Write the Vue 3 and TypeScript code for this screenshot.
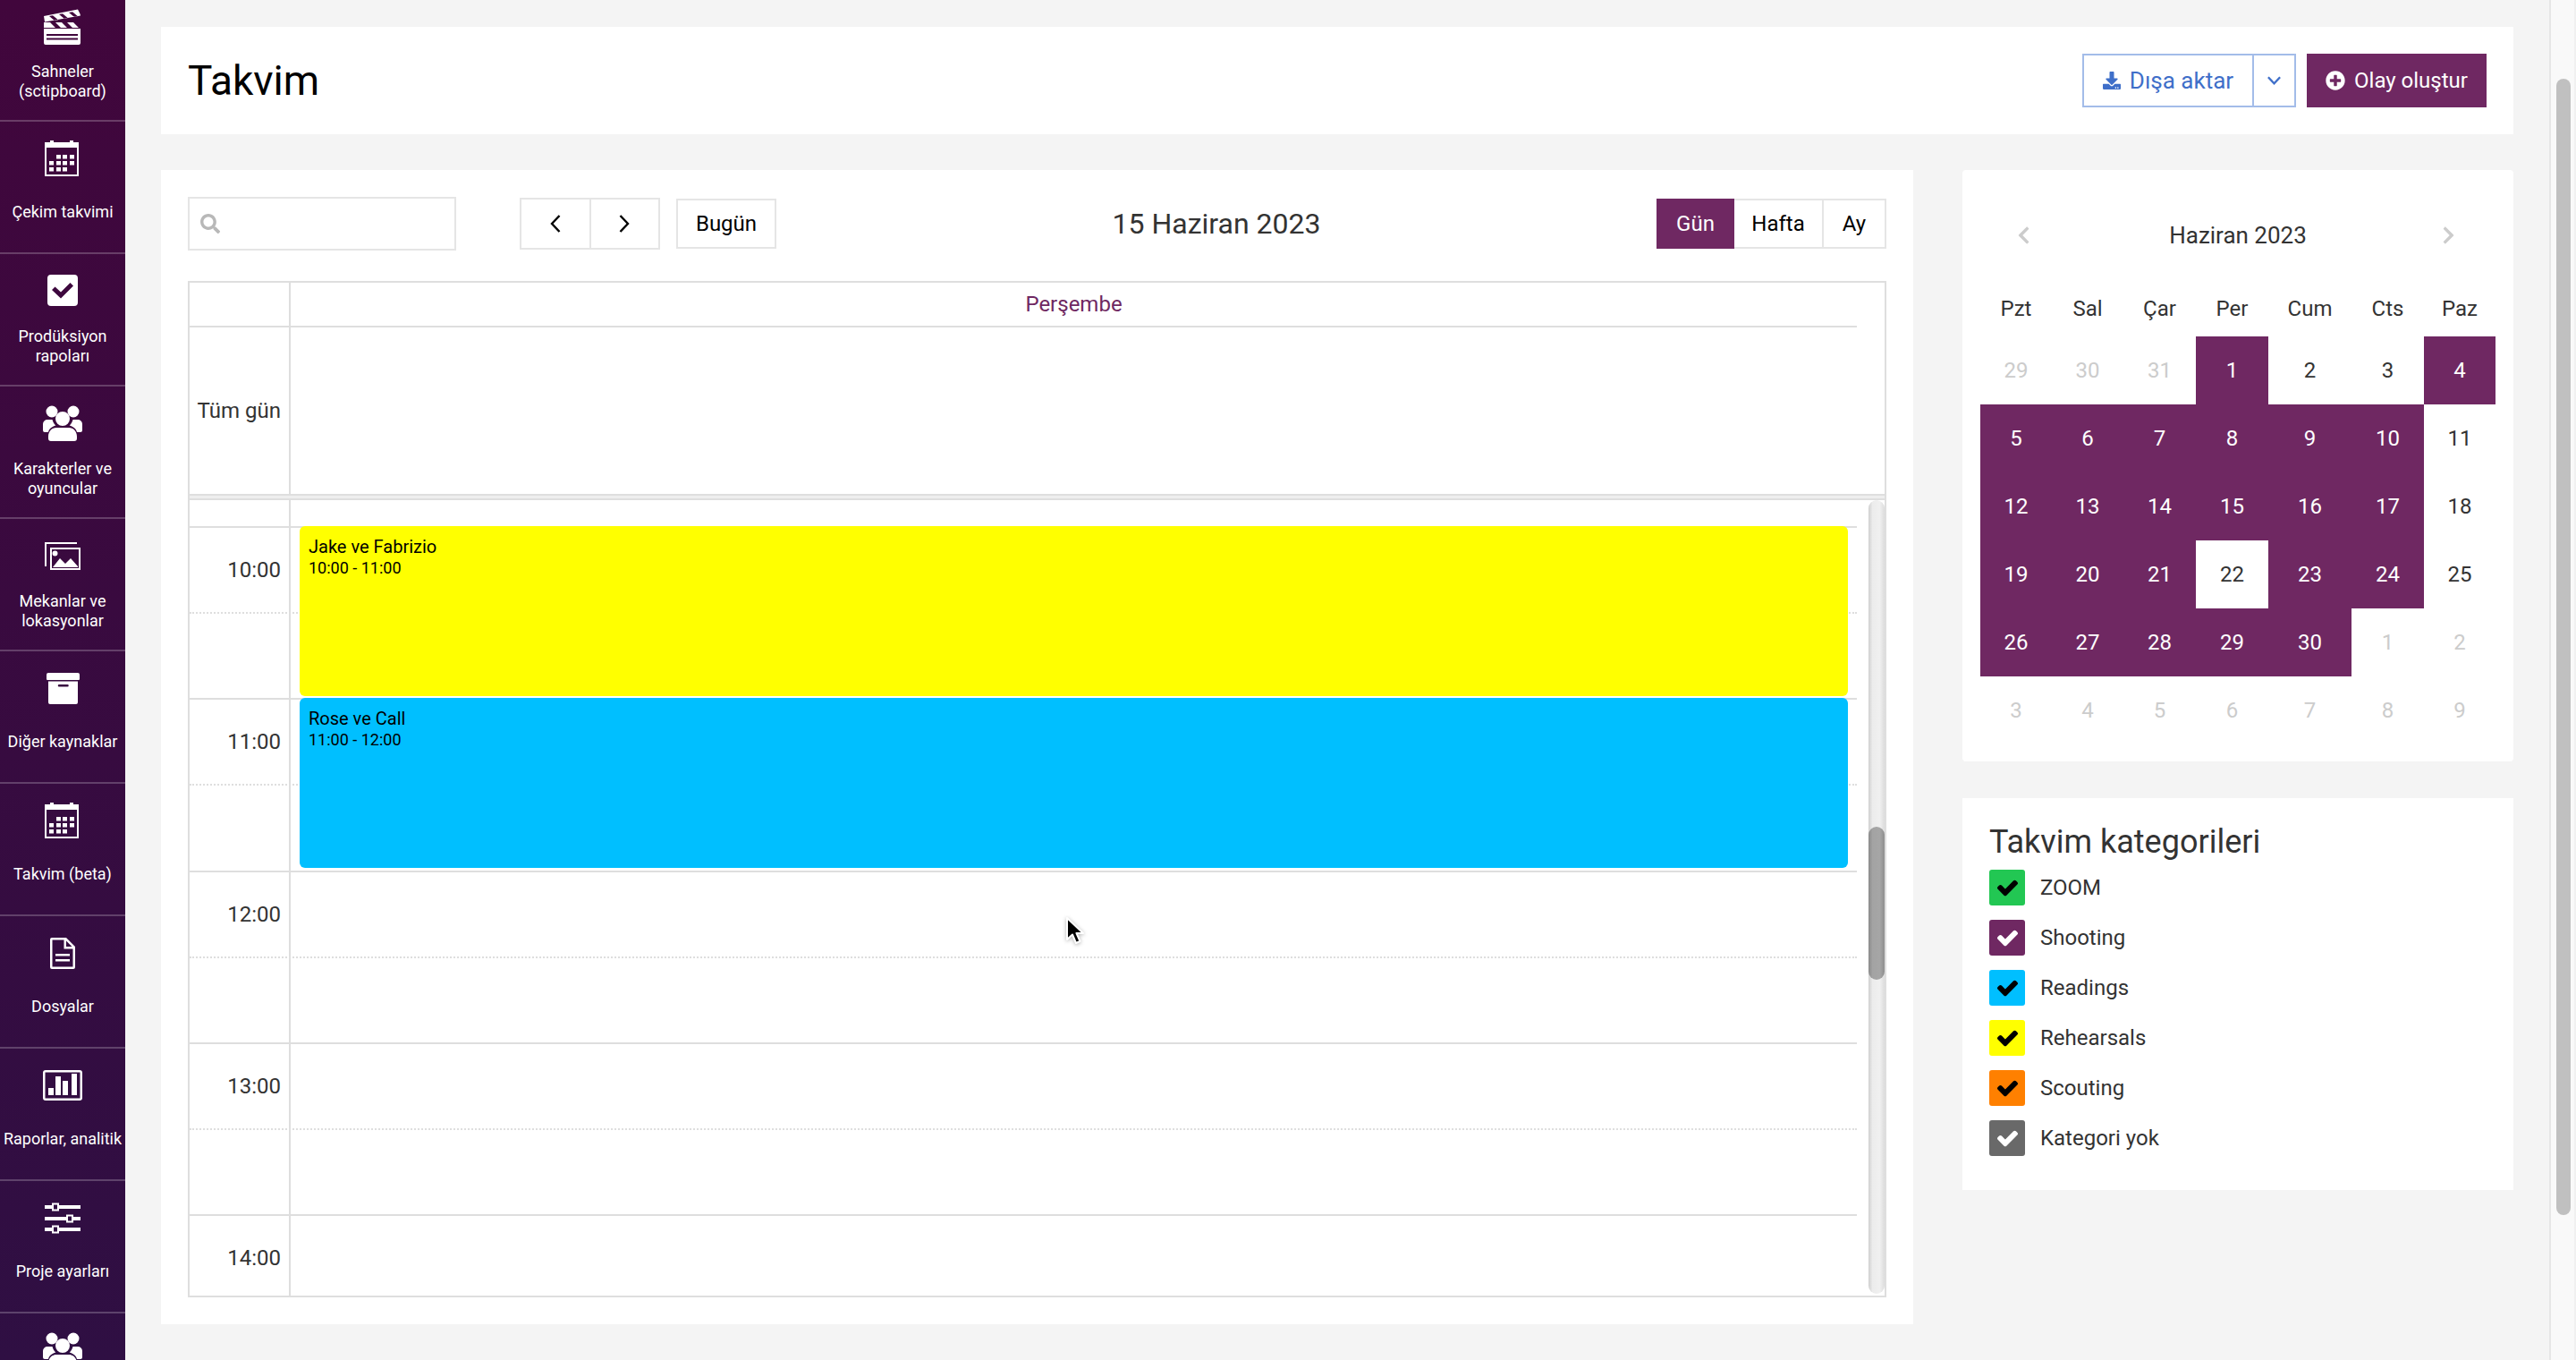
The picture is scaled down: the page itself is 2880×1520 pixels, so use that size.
<script setup lang="ts">
const cal = 'M4 3H10V1H14V3H32V1H36V3H42V41H4Z M6 9H40V39H6Z M17 17H22V21.5H17Z M24 17H29V21.5H24Z M32 17H37V21.5H32Z M9 24H14V28.5H9Z M17 24H22V28.5H17Z M24 24H29V28.5H24Z M32 24H37V28.5H32Z M9 31H14V35.5H9Z M17 31H22V35.5H17Z M24 31H29V35.5H24Z'
const users = 'M5.5 8a6.5 6.5 0 1 0 13 0a6.5 6.5 0 1 0-13 0Z M29.5 8a6.5 6.5 0 1 0 13 0a6.5 6.5 0 1 0-13 0Z M16 16a8 8 0 1 0 16 0a8 8 0 1 0-16 0Z M2 22a5 5 0 0 1 5-5h5.5c.8 3 2 5 3.8 6.5C12 25 9 27 8 31H4a2 2 0 0 1-2-2Z M46 22a5 5 0 0 0-5-5h-5.5c-.8 3-2 5-3.8 6.5C36 25 39 27 40 31H44a2 2 0 0 0 2-2Z M8 36c0-6 4-10 9-10h14c5 0 9 4 9 10v2a3 3 0 0 1-3 3H11a3 3 0 0 1-3-3Z'

const navItems: { lines: string[]; d: string }[] = [
  { lines: ['Sahneler', '(sctipboard)'], d: 'M3 10L41 2.5L43.5 7.5L44 9.5L4 16.5Z M3 17H10L16 23H3Z M16 17H23L29 23H22Z M29 17H36L42 23H35Z M3 24H44V40a2 2 0 0 1-2 2H5a2 2 0 0 1-2-2Z M6 30H41V32H6Z M6 34.5H41V36.5H6Z M9 10L15 15L19 14.2L13 9.2Z M20 8L26 13L30 12.2L24 7.2Z M31 6L37 11L41 10.2L35 5.2Z' },
  { lines: ['Çekim takvimi'], d: cal },
  { lines: ['Prodüksiyon', 'rapoları'], d: 'M11 3H37a4 4 0 0 1 4 4V34a4 4 0 0 1-4 4H11a4 4 0 0 1-4-4V7a4 4 0 0 1 4-4Z M12 20L15.5 16.5L22 22.5L32.5 12L36 15.5L22 29.5Z' },
  { lines: ['Karakterler ve', 'oyuncular'], d: users },
  { lines: ['Mekanlar ve', 'lokasyonlar'], d: 'M4 6H40V8H6V33H4Z M10 12H44V37H10Z M12 14H42V35H12Z M13 34L21 24L27 30L33 24L41 33V34Z M12.5 18.5a3 3 0 1 0 6 0a3 3 0 1 0-6 0Z' },
  { lines: ['Diğer kaynaklar'], d: 'M6 6a2 2 0 0 1 2-2H41a2 2 0 0 1 2 2V11a1 1 0 0 1-1 1H7a1 1 0 0 1-1-1Z M8 13.5H41V37a2 2 0 0 1-2 2H10a2 2 0 0 1-2-2Z M20 17H29.5a1 1 0 0 1 0 2.5H20a1 1 0 0 1 0-2.5Z' },
  { lines: ['Takvim (beta)'], d: cal },
  { lines: ['Dosyalar'], d: 'M12 4H28L38 14V37a2 2 0 0 1-2 2H12a2 2 0 0 1-2-2V6a2 2 0 0 1 2-2Z M12.5 6.5H25.5V16.5H35.5V36.5H12.5Z M28 7.5L34.5 14H28Z M16 22H32V24.5H16Z M16 28H32V30.5H16Z' },
  { lines: ['Raporlar, analitik'], d: 'M5 4H43a3 3 0 0 1 3 3V35a3 3 0 0 1-3 3H5a3 3 0 0 1-3-3V7a3 3 0 0 1 3-3Z M4.5 6.5H43.5V35.5H4.5Z M8 24H14V32H8Z M16 11H22V32H16Z M24 16H30V32H24Z M34 8H40V32H34Z' },
  { lines: ['Proje ayarları'], d: 'M4 7H12V11H4Z M20 7H44V11H20Z M12 4.5H20V13.5H12Z M14 6.5H18V11.5H14Z M4 20H28V24H4Z M36 20H44V24H36Z M28 17.5H36V26.5H28Z M30 19.5H34V24.5H30Z M4 32H12V36H4Z M20 32H44V36H20Z M12 29.5H20V38.5H12Z M14 31.5H18V36.5H14Z' },
  { lines: [], d: users }
]

const hours = ['10:00', '11:00', '12:00', '13:00', '14:00']
const events: Record<string, { title: string; time: string; color: string }> = {
  '10:00': { title: 'Jake ve Fabrizio', time: '10:00 - 11:00', color: '#ffff00' },
  '11:00': { title: 'Rose ve Call', time: '11:00 - 12:00', color: '#00bfff' }
}

const weekdays = ['Pzt', 'Sal', 'Çar', 'Per', 'Cum', 'Cts', 'Paz']
const active = new Set([1, 4, 5, 6, 7, 8, 9, 10, 12, 13, 14, 15, 16, 17, 19, 20, 21, 23, 24, 26, 27, 28, 29, 30])
type Day = { n: number; cls: string }
const days: Day[] = []
for (const n of [29, 30, 31]) days.push({ n, cls: 'dim' })
for (let n = 1; n <= 30; n++) days.push({ n, cls: active.has(n) ? 'on' : '' })
for (const n of [1, 2, 3, 4, 5, 6, 7, 8, 9]) days.push({ n, cls: 'dim' })

const categories = [
  { name: 'ZOOM', color: '#22c753', check: '#000' },
  { name: 'Shooting', color: '#6f2862', check: '#fff' },
  { name: 'Readings', color: '#00bfff', check: '#000' },
  { name: 'Rehearsals', color: '#ffff00', check: '#000' },
  { name: 'Scouting', color: '#ff8000', check: '#000' },
  { name: 'Kategori yok', color: '#696969', check: '#fff' }
]
</script>

<template>
  <div class="app">
    <aside class="sidebar">
      <a v-for="(item, i) in navItems" :key="i" class="nav-item">
        <svg class="nav-icon" viewBox="0 0 48 48" width="48" height="48">
          <path :d="item.d" fill="#fff" fill-rule="evenodd" />
        </svg>
        <span v-if="item.lines.length" class="nav-label" :class="{ single: item.lines.length === 1 }">
          <span v-for="line in item.lines" :key="line" class="nav-line">{{ line }}</span>
        </span>
      </a>
    </aside>

    <main class="page">
      <header class="card head">
        <h1 class="title">Takvim</h1>
        <div class="head-actions">
          <div class="export">
            <button class="export-main">
              <svg viewBox="0 0 512 512" width="20" height="20"><path fill="#3f6fc9" d="M216 0h80c13.3 0 24 10.7 24 24v168h87.7c17.8 0 26.7 21.5 14.1 34.1L269.7 378.3c-7.5 7.5-19.8 7.5-27.3 0L90.1 226.1c-12.6-12.6-3.7-34.1 14.1-34.1H192V24c0-13.3 10.7-24 24-24zm296 376v112c0 13.3-10.7 24-24 24H24c-13.3 0-24-10.7-24-24V376c0-13.3 10.7-24 24-24h146.7l49 49c20.1 20.1 52.5 20.1 72.6 0l49-49H488c13.3 0 24 10.7 24 24zm-124 88c0-11-9-20-20-20s-20 9-20 20 9 20 20 20 20-9 20-20zm64 0c0-11-9-20-20-20s-20 9-20 20 9 20 20 20 20-9 20-20z" /></svg>
              Dışa aktar
            </button>
            <button class="export-caret">
              <svg viewBox="0 0 18 12" width="17" height="12"><path d="M2 2L9 9.5L16 2" fill="none" stroke="#3f6fc9" stroke-width="2.4" /></svg>
            </button>
          </div>
          <button class="primary">
            <svg viewBox="0 0 512 512" width="22" height="22"><path fill="#fff" d="M256 8C119 8 8 119 8 256s111 248 248 248 248-111 248-248S393 8 256 8zm144 276c0 6.6-5.4 12-12 12h-92v92c0 6.6-5.4 12-12 12h-56c-6.6 0-12-5.4-12-12v-92h-92c-6.6 0-12-5.4-12-12v-56c0-6.6 5.4-12 12-12h92v-92c0-6.6 5.4-12 12-12h56c6.6 0 12 5.4 12 12v92h92c6.6 0 12 5.4 12 12v56z" /></svg>
            Olay oluştur
          </button>
        </div>
      </header>

      <div class="columns">
        <section class="card main-card">
          <div class="toolbar">
            <div class="search">
              <svg viewBox="0 0 512 512" width="22" height="22"><path fill="#b8b8b8" d="M505 442.7L405.3 343c-4.5-4.5-10.6-7-17-7H372c27.6-35.3 44-79.7 44-128C416 93.1 322.9 0 208 0S0 93.1 0 208s93.1 208 208 208c48.3 0 92.7-16.4 128-44v16.3c0 6.4 2.5 12.5 7 17l99.7 99.7c9.4 9.4 24.6 9.4 33.9 0l28.3-28.3c9.4-9.4 9.4-24.6.1-34zM208 336c-70.7 0-128-57.2-128-128 0-70.7 57.2-128 128-128 70.7 0 128 57.2 128 128 0 70.7-57.2 128-128 128z" /></svg>
            </div>
            <div class="nav-group">
              <button class="nav-btn"><svg viewBox="0 0 14 22" width="14" height="22"><path d="M11.5 2L3 11L11.5 20" fill="none" stroke="#000" stroke-width="2.4" /></svg></button>
              <button class="nav-btn"><svg viewBox="0 0 14 22" width="14" height="22"><path d="M2.5 2L11 11L2.5 20" fill="none" stroke="#000" stroke-width="2.4" /></svg></button>
            </div>
            <button class="today">Bugün</button>
            <div class="cal-title">15 Haziran 2023</div>
            <div class="views">
              <button class="view on">Gün</button>
              <button class="view hafta">Hafta</button>
              <button class="view ay">Ay</button>
            </div>
          </div>

          <div class="calendar">
            <div class="cal-head">
              <div class="gutter"></div>
              <div class="day-name">Perşembe</div>
            </div>
            <div class="all-day">
              <div class="gutter gutter-label">Tüm gün</div>
              <div class="all-day-cell"></div>
            </div>
            <div class="divider"></div>
            <div class="scroller">
              <div class="slots">
                <div class="slot-top">
                  <div class="gutter"></div>
                </div>
                <template v-for="h in hours" :key="h">
                  <div class="slot hour">
                    <div class="gutter gutter-label">{{ h }}</div>
                    <div class="slot-cell">
                      <div v-if="events[h]" class="event" :style="{ background: events[h].color }">
                        <div class="event-title">{{ events[h].title }}</div>
                        <div class="event-time">{{ events[h].time }}</div>
                      </div>
                    </div>
                  </div>
                  <div class="slot half">
                    <div class="gutter"></div>
                    <div class="slot-cell"></div>
                  </div>
                </template>
              </div>
              <div class="vbar"><div class="vbar-thumb"></div></div>
            </div>
          </div>
        </section>

        <div class="side">
          <section class="card mini">
            <div class="mini-head">
              <svg class="mini-prev" viewBox="0 0 320 512" width="15" height="22"><path fill="#ccc" d="M34.52 239.03L228.87 44.69c9.37-9.37 24.57-9.37 33.94 0l22.67 22.67c9.36 9.36 9.37 24.52.04 33.9L131.49 256l154.02 154.75c9.34 9.38 9.32 24.54-.04 33.9l-22.67 22.67c-9.37 9.37-24.57 9.37-33.94 0L34.52 272.97c-9.37-9.37-9.37-24.57 0-33.94z" /></svg>
              <span class="mini-title">Haziran 2023</span>
              <svg class="mini-next" viewBox="0 0 320 512" width="15" height="22"><path fill="#ccc" d="M285.476 272.971L91.132 467.314c-9.373 9.373-24.569 9.373-33.941 0l-22.667-22.667c-9.357-9.357-9.375-24.522-.04-33.901L188.505 256 34.484 101.255c-9.335-9.379-9.317-24.544.04-33.901l22.667-22.667c9.373-9.373 24.569-9.373 33.941 0L285.475 239.03c9.373 9.372 9.373 24.568.001 33.941z" /></svg>
            </div>
            <div class="mini-grid">
              <div v-for="w in weekdays" :key="w" class="wd">{{ w }}</div>
              <div v-for="(d, i) in days" :key="i" class="dc" :class="d.cls">{{ d.n }}</div>
            </div>
          </section>

          <section class="card cats">
            <h2 class="cats-title">Takvim kategorileri</h2>
            <div class="cats-list">
              <label v-for="c in categories" :key="c.name" class="cat">
                <span class="box" :style="{ background: c.color }">
                  <svg viewBox="-24 -24 560 560" width="23" height="23"><path :fill="c.check" :stroke="c.check" stroke-width="44" stroke-linejoin="round" d="M173.898 439.404l-166.4-166.4c-9.997-9.997-9.997-26.206 0-36.204l36.203-36.204c9.997-9.998 26.207-9.998 36.204 0L192 312.69 432.095 72.596c9.997-9.997 26.206-9.997 36.204 0l36.203 36.204c9.997 9.997 9.997 26.206 0 36.204l-294.4 294.401c-9.998 9.997-26.207 9.997-36.204-.001z" /></svg>
                </span>
                {{ c.name }}
              </label>
            </div>
          </section>
        </div>
      </div>
    </main>

    <div class="page-bar"><div class="page-thumb"></div></div>

    <svg class="cursor" viewBox="0 0 24 34" width="24" height="34">
      <path d="M3 2V26L9 20.5L13 30L17.5 28L13.5 19H21Z" fill="#000" stroke="#fff" stroke-width="2" stroke-linejoin="round" />
    </svg>
  </div>
</template>

<style>
html, body { margin: 0; padding: 0; background: #f4f4f4; }
</style>

<style scoped>
.app {
  position: relative;
  display: flex;
  width: 2880px;
  height: 1520px;
  overflow: hidden;
  background: #f4f4f4;
  font-family: Roboto, sans-serif;
  font-size: 24px;
  color: #333;
}
button { font-family: inherit; background: none; border: 0; padding: 0; margin: 0; cursor: pointer; }

.sidebar {
  flex: 0 0 140px;
  height: 1520px;
  overflow: hidden;
  background: linear-gradient(180deg, #41063c 0%, #2f0f43 100%);
}
.nav-item {
  display: flex;
  flex-direction: column;
  align-items: center;
  box-sizing: border-box;
  height: 148px;
  padding-top: 20px;
  border-bottom: 2px solid rgba(255, 255, 255, 0.22);
  color: #fff;
}
.nav-item:first-child { margin-top: -12px; }
.nav-icon { display: block; flex: none; }
.nav-label {
  display: block;
  margin-top: 13px;
  font-size: 18px;
  line-height: 22px;
  text-align: center;
  white-space: nowrap;
}
.nav-label.single { padding-top: 9px; }
.nav-line { display: block; }

.page {
  flex: 0 0 2710px;
  box-sizing: border-box;
  height: 1520px;
  padding: 30px 40px 0;
}
.card { background: #fff; border-radius: 4px; box-sizing: border-box; }
.head {
  display: flex;
  align-items: center;
  justify-content: space-between;
  height: 120px;
  padding: 0 30px;
  border-radius: 0;
}
.title { margin: 0; font-size: 46px; font-weight: 400; color: #000; }
.head-actions { display: flex; gap: 12px; }
.export {
  display: flex;
  box-sizing: border-box;
  width: 239px;
  height: 60px;
  border: 2px solid #a3bce9;
}
.export-main {
  display: flex;
  align-items: center;
  justify-content: center;
  gap: 10px;
  width: 190px;
  border-right: 2px solid #a3bce9;
  color: #3f6fc9;
  font-size: 26px;
}
.export-caret { display: flex; align-items: center; justify-content: center; flex: 1; }
.primary {
  display: flex;
  align-items: center;
  justify-content: center;
  gap: 10px;
  width: 201px;
  height: 60px;
  background: #6f2862;
  color: #fff;
  font-size: 24px;
}

.columns { display: flex; margin-top: 40px; }
.main-card {
  flex: 0 0 1959px;
  height: 1290px;
  padding: 30px 30px 0;
  border-radius: 0;
}
.toolbar { position: relative; display: flex; align-items: center; height: 60px; }
.search {
  display: flex;
  align-items: center;
  box-sizing: border-box;
  width: 300px;
  height: 60px;
  padding-left: 12px;
  border: 2px solid #e5e5e5;
}
.nav-group {
  display: flex;
  box-sizing: border-box;
  width: 157px;
  height: 58px;
  margin-left: 71px;
  border: 2px solid #e5e5e5;
}
.nav-btn { display: flex; align-items: center; justify-content: center; flex: 1; }
.nav-btn + .nav-btn { border-left: 2px solid #e5e5e5; }
.today {
  box-sizing: border-box;
  width: 112px;
  height: 56px;
  margin-left: 18px;
  border: 2px solid #e5e5e5;
  color: #000;
  font-size: 24px;
}
.cal-title {
  flex: 1;
  text-align: center;
  font-size: 32px;
  color: #333;
}
.views { display: flex; height: 56px; box-sizing: border-box; }
.view {
  box-sizing: border-box;
  height: 56px;
  border: 2px solid #e5e5e5;
  border-left: 0;
  color: #000;
  font-size: 24px;
}
.view.on { width: 87px; background: #6f2862; border: 0; color: #fff; }
.view.hafta { width: 100px; }
.view.ay { width: 70px; }

.calendar {
  box-sizing: border-box;
  width: 1899px;
  height: 1136px;
  margin-top: 34px;
  border: 2px solid #dedede;
}
.cal-head {
  display: flex;
  box-sizing: border-box;
  height: 50px;
  margin-right: 31px;
  border-bottom: 2px solid #dedede;
}
.gutter {
  flex: 0 0 111px;
  box-sizing: content-box;
  width: 111px;
  border-right: 2px solid #dedede;
}
.gutter-label { padding-right: 0; text-align: right; }
.day-name {
  flex: 1;
  line-height: 48px;
  text-align: center;
  color: #6f2862;
  font-size: 24px;
}
.all-day { display: flex; height: 186px; }
.all-day .gutter-label {
  display: flex;
  align-items: center;
  justify-content: flex-end;
  box-sizing: border-box;
  flex-basis: 113px;
  width: 113px;
  padding-right: 9px;
}
.all-day-cell { flex: 1; }
.divider {
  box-sizing: border-box;
  height: 7px;
  background: #eee;
  border-top: 2px solid #dedede;
  border-bottom: 2px solid #dedede;
}
.scroller { display: flex; height: 889px; overflow: hidden; }
.slots { flex: 0 0 1864px; overflow: hidden; }
.slot-top { display: flex; height: 29px; }
.slot { display: flex; box-sizing: border-box; height: 96.125px; }
.slot.hour { border-top: 2px solid #dedede; }
.slot.half { border-top: 2px dotted #dedede; }
.slot .gutter-label {
  display: flex;
  align-items: center;
  justify-content: flex-end;
  box-sizing: border-box;
  flex-basis: 113px;
  width: 113px;
  padding-right: 9px;
}
.slot-cell { position: relative; flex: 1; }
.event {
  position: absolute;
  left: 10px;
  right: 10px;
  top: -2px;
  z-index: 1;
  box-sizing: border-box;
  height: 190px;
  padding: 11px 10px;
  border-radius: 6px;
  color: #000;
}
.event-title { font-size: 20px; line-height: 24px; }
.event-time { font-size: 18px; line-height: 24px; }

.vbar {
  flex: none;
  width: 18px;
  height: 887px;
  margin-left: 13px;
  border-radius: 9px;
  background: linear-gradient(90deg, #cfcfcf 0%, #ececec 25%, #f0f0f0 70%, #dcdcdc 100%);
}
.vbar-thumb {
  height: 171px;
  margin-top: 365px;
  border-radius: 9px;
  background: linear-gradient(90deg, #8a8a8a 0%, #a3a3a3 25%, #a6a6a6 70%, #8e8e8e 100%);
}

.side { flex: 0 0 616px; margin-left: 55px; }
.mini { height: 661px; padding: 50px 20px 0; }
.mini-head {
  display: grid;
  grid-template-columns: 1fr auto 1fr;
  align-items: center;
  height: 44px;
  margin-bottom: 30px;
}
.mini-prev { justify-self: start; margin-left: 41px; }
.mini-next { justify-self: end; margin-right: 45px; }
.mini-title { font-size: 26px; line-height: 46px; color: #333; }
.mini-grid {
  display: grid;
  grid-template-columns: 80px 80px 81px 81px 93px 81px 80px;
  grid-template-rows: 62px repeat(6, 76px);
  text-align: center;
}
.wd { font-size: 24px; line-height: 63px; color: #333; }
.dc { font-size: 24px; line-height: 76px; color: #333; }
.dc.on { background: #6f2862; color: #fff; }
.dc.dim { color: #ccc; }

.cats { height: 438px; margin-top: 41px; padding: 24px 30px 0; border-radius: 0; }
.cats-title { margin: 0; font-size: 36px; line-height: 50px; font-weight: 400; color: #333; }
.cats-list { display: flex; flex-direction: column; gap: 16px; margin-top: 6px; }
.cat { display: flex; align-items: center; gap: 17px; height: 40px; font-size: 24px; color: #333; }
.box {
  display: flex;
  align-items: center;
  justify-content: center;
  width: 40px;
  height: 40px;
  border-radius: 3px;
}

.page-bar {
  flex: 0 0 30px;
  box-sizing: border-box;
  height: 1520px;
  padding-top: 88px;
  background: #f9f9f9;
  border-left: 2px solid #e6e6e6;
  border-right: 2px solid #f0f0f0;
}
.page-thumb {
  width: 16px;
  height: 1270px;
  margin-left: 6px;
  border-radius: 8px;
  background: #c0c0c0;
}
.cursor {
  position: absolute;
  left: 1190px;
  top: 1024px;
  filter: drop-shadow(0 1px 2px rgba(0, 0, 0, 0.3));
}
</style>
